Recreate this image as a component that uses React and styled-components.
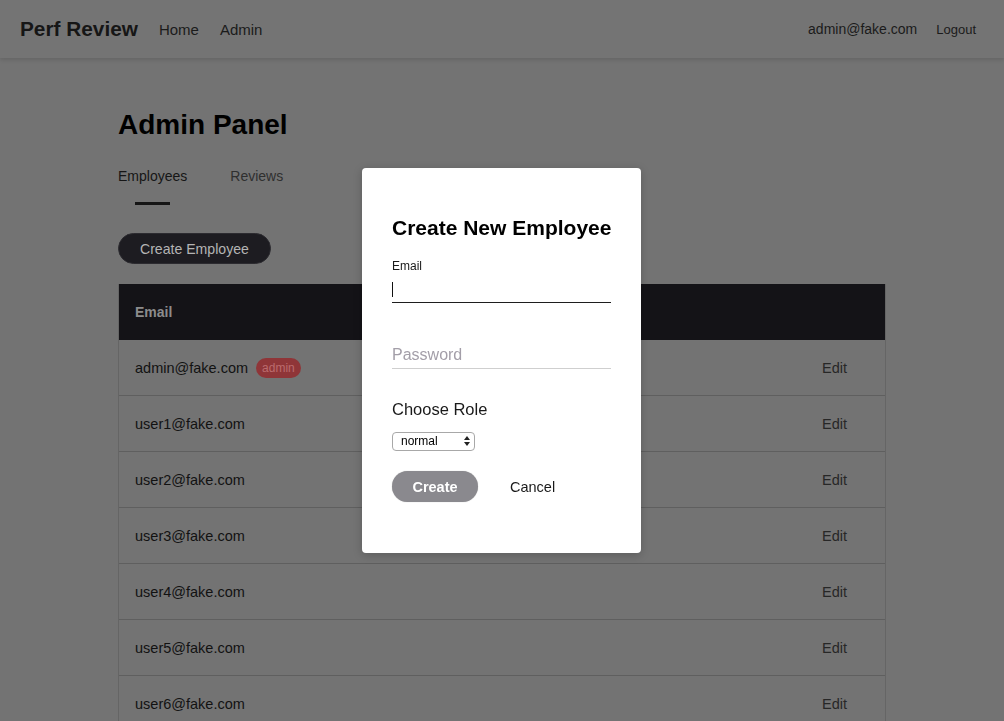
import React from 'react';
import styled, { createGlobalStyle } from 'styled-components';

const GlobalStyle = createGlobalStyle`
  html, body {
    margin: 0;
    padding: 0;
    background: #737373;
    font-family: "Liberation Sans", Arial, Helvetica, sans-serif;
    overflow: hidden;
  }
  * {
    box-sizing: border-box;
  }
`;

const Page = styled.div`
  min-height: 721px;
  background: #737373;
`;

const Header = styled.header`
  height: 58px;
  display: flex;
  align-items: center;
  justify-content: space-between;
  padding: 0 28px 0 20px;
  background: #747474;
  box-shadow: 0 2px 4px rgba(0, 0, 0, 0.12);
  position: relative;
`;

const NavGroup = styled.nav`
  display: flex;
  align-items: center;
  gap: ${props => props.gap || 24}px;
`;

const Brand = styled.div`
  font-size: 20.8px;
  font-weight: 700;
  color: #161616;
`;

const NavLink = styled.a`
  font-size: ${props => props.size || 15}px;
  color: #1b1b1b;
  text-decoration: none;
`;

const Main = styled.main`
  width: 768px;
  margin: 0 auto;
  padding-top: 51px;
`;

const Title = styled.h1`
  margin: 0;
  font-size: 28px;
  line-height: 32px;
  font-weight: 700;
  color: #000;
`;

const Tabs = styled.div`
  display: flex;
  gap: 43px;
  margin-top: 27px;
`;

const Tab = styled.div`
  display: flex;
  flex-direction: column;
  align-items: center;
  font-size: 14px;
  line-height: 16px;
  color: ${props => (props.active ? '#161616' : '#2f2f2f')};

  &::after {
    content: '';
    display: block;
    width: 35px;
    height: 3px;
    margin-top: 18px;
    background: ${props => (props.active ? '#161616' : 'transparent')};
  }
`;

const DarkButton = styled.button`
  margin-top: 28px;
  height: 31px;
  padding: 0 21px;
  border: 1px solid #2c2b30;
  border-radius: 16px;
  background: #1d1c21;
  color: #b4b4b4;
  font-family: inherit;
  font-size: 14.1px;
`;

const Table = styled.div`
  margin-top: 20px;
  border-left: 1px solid #656565;
  border-right: 1px solid #656565;
`;

const HeadRow = styled.div`
  height: 56px;
  display: flex;
  align-items: center;
  padding: 0 16px;
  background: #141317;
  color: #8c8c8c;
  font-size: 14px;
  font-weight: 700;
`;

const Row = styled.div`
  height: 56px;
  display: flex;
  align-items: center;
  justify-content: space-between;
  padding: 0 38px 0 16px;
  border-bottom: 1px solid #5f5f5f;
  font-size: 14.5px;
  color: #121212;
`;

const EmailCell = styled.div`
  display: flex;
  align-items: center;
  gap: 8px;
`;

const Badge = styled.span`
  height: 20px;
  padding: 0 6px;
  border-radius: 10px;
  background: #8f3538;
  color: #bb6b6e;
  font-size: 12px;
  line-height: 20px;
`;

const EditLink = styled.span`
  color: #272727;
`;

const Backdrop = styled.div`
  position: fixed;
  inset: 0;
  display: flex;
  align-items: center;
  justify-content: center;
`;

const Modal = styled.div`
  width: 279px;
  height: 385px;
  margin-left: -1px;
  padding: 46px 30px 0;
  background: #fff;
  border-radius: 4px;
  box-shadow: 0 2px 10px rgba(0, 0, 0, 0.2);
`;

const ModalTitle = styled.h2`
  margin: 0;
  font-size: 21px;
  line-height: 28px;
  font-weight: 700;
  color: #000;
  white-space: nowrap;
`;

const Label = styled.label`
  display: block;
  margin-top: 17px;
  font-size: 12px;
  line-height: 14px;
  color: #1a1a1a;
`;

const InputWrap = styled.div`
  position: relative;
  margin-top: ${props => props.mt || 0}px;
`;

const Caret = styled.span`
  position: absolute;
  left: 0;
  top: 7px;
  width: 1px;
  height: 15px;
  background: #111;
`;

const TextInput = styled.input`
  display: block;
  width: 100%;
  height: ${props => props.h || 24}px;
  padding: 0;
  border: none;
  border-bottom: 1px solid ${props => (props.focused ? '#1e1e1e' : '#cfcfcf')};
  outline: none;
  font-family: inherit;
  font-size: 16px;
  color: #111;
  background: transparent;
  caret-color: transparent;

  &::placeholder {
    color: #a39ea8;
  }
`;

const SectionLabel = styled.div`
  margin-top: 30px;
  font-size: 16.5px;
  line-height: 20px;
  color: #1a1a1a;
`;

const SelectWrap = styled.div`
  position: relative;
  width: 83px;
  height: 19px;
  margin-top: 12px;
`;

const Select = styled.select`
  appearance: none;
  -webkit-appearance: none;
  width: 100%;
  height: 100%;
  padding: 0 0 0 8px;
  border: 1px solid #a8a8a8;
  border-radius: 4px;
  background: #fff;
  font-family: inherit;
  font-size: 12px;
  color: #000;
  outline: none;
`;

const Arrows = styled.svg`
  position: absolute;
  right: 5px;
  top: 5px;
  pointer-events: none;
`;

const Actions = styled.div`
  display: flex;
  align-items: center;
  gap: 32px;
  margin-top: 21px;
`;

const PrimaryButton = styled.button`
  width: 86px;
  height: 31px;
  border: none;
  border-radius: 16px;
  background: #8a898e;
  color: #fff;
  font-family: inherit;
  font-size: 14.5px;
  font-weight: 700;
  box-shadow: 0 0 1px rgba(0, 0, 0, 0.3);
`;

const TextButton = styled.button`
  border: none;
  background: none;
  padding: 0;
  font-family: inherit;
  font-size: 14.5px;
  color: #1a1a1a;
`;

const users = [
  { email: 'admin@fake.com', admin: true },
  { email: 'user1@fake.com' },
  { email: 'user2@fake.com' },
  { email: 'user3@fake.com' },
  { email: 'user4@fake.com' },
  { email: 'user5@fake.com' },
  { email: 'user6@fake.com' },
];

const App = () => (
  <Page>
    <GlobalStyle />
    <Header>
      <NavGroup gap={21}>
        <Brand>Perf Review</Brand>
        <NavLink>Home</NavLink>
        <NavLink>Admin</NavLink>
      </NavGroup>
      <NavGroup gap={19}>
        <NavLink size={14}>admin@fake.com</NavLink>
        <NavLink size={13}>Logout</NavLink>
      </NavGroup>
    </Header>
    <Main>
      <Title>Admin Panel</Title>
      <Tabs>
        <Tab active>Employees</Tab>
        <Tab>Reviews</Tab>
      </Tabs>
      <DarkButton>Create Employee</DarkButton>
      <Table>
        <HeadRow>Email</HeadRow>
        {users.map(user => (
          <Row key={user.email}>
            <EmailCell>
              {user.email}
              {user.admin && <Badge>admin</Badge>}
            </EmailCell>
            <EditLink>Edit</EditLink>
          </Row>
        ))}
      </Table>
    </Main>
    <Backdrop>
      <Modal>
        <ModalTitle>Create New Employee</ModalTitle>
        <Label>Email</Label>
        <InputWrap mt={2}>
          <TextInput focused h={28} />
          <Caret />
        </InputWrap>
        <InputWrap mt={38}>
          <TextInput type="password" placeholder="Password" h={28} />
        </InputWrap>
        <SectionLabel>Choose Role</SectionLabel>
        <SelectWrap>
          <Select defaultValue="normal">
            <option value="normal">normal</option>
            <option value="admin">admin</option>
          </Select>
          <Arrows width="6" height="10" viewBox="0 0 6 10">
            <path d="M3 0 L6 4 L0 4 Z M3 10 L6 6 L0 6 Z" fill="#222" />
          </Arrows>
        </SelectWrap>
        <Actions>
          <PrimaryButton>Create</PrimaryButton>
          <TextButton>Cancel</TextButton>
        </Actions>
      </Modal>
    </Backdrop>
  </Page>
);

export default App;
